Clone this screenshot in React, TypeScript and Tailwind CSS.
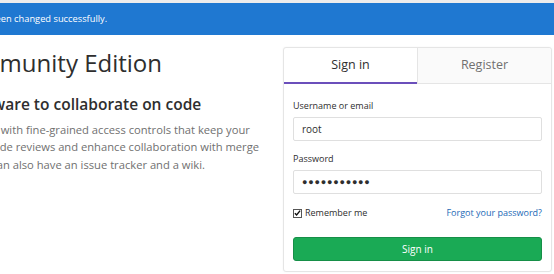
const font = { fontFamily: '"Open Sans", "Noto Sans", sans-serif' };

function Flash() {
  return (
    <div className="flex h-[32px] items-center overflow-hidden bg-[#1f78d1] text-[9.3px] text-white">
      <span className="-ml-[95px] whitespace-nowrap">Your password has been changed successfully.</span>
    </div>
  );
}

function Intro() {
  return (
    <div className="min-w-0 flex-1 overflow-hidden pt-[14px] text-[#2e2e2e]">
      <h1 className="-ml-[131px] whitespace-nowrap text-[24px] leading-[28px] font-normal">GitLab Community Edition</h1>
      <h3 className="mt-[17px] -ml-[135px] whitespace-nowrap text-[15.5px] leading-[20px] font-semibold">
        Open source software to collaborate on code
      </h3>
      <p className="mt-[7px] -ml-[127px] whitespace-nowrap text-[11.2px] leading-[17.3px] text-[#707070]">
        Manage Git repositories with fine-grained access controls that keep your
        <br />
        code secure. Perform code reviews and enhance collaboration with merge
        <br />
        requests. Each project can also have an issue tracker and a wiki.
      </p>
    </div>
  );
}

function Field({ label, value, password }: { label: string; value: string; password?: boolean }) {
  return (
    <div>
      <label className="block text-[9px] leading-[14px] text-[#2e2e2e]">{label}</label>
      <div className="mt-[4px] flex h-[24px] items-center rounded-[2px] border border-[#dfdfdf] bg-white px-[8px] text-[10px] text-[#2e2e2e]">
        {password ? <span className="text-[9px] tracking-[0.8px]">{value}</span> : value}
      </div>
    </div>
  );
}

function SignInCard() {
  return (
    <div className="mt-[12px] mr-[2px] w-[269px] shrink-0 self-start rounded-[3px] border border-[#e5e5e5] bg-white shadow-[0_0_2px_rgba(0,0,0,0.05)]">
      <div className="flex h-[36px]">
        <div className="flex flex-1 items-center justify-center border-b-2 border-[#6b4fbb] text-[12.5px] text-[#2e2e2e]">
          Sign in
        </div>
        <div className="flex flex-1 items-center justify-center rounded-tr-[3px] border-b border-l border-[#e5e5e5] bg-[#fafafa] text-[12.5px] text-[#707070]">
          Register
        </div>
      </div>
      <div className="px-[9px] pt-[15px] pb-[10px]">
        <Field label="Username or email" value="root" />
        <div className="mt-[11px]">
          <Field label="Password" value="●●●●●●●●●●●" password />
        </div>
        <div className="mt-[12px] flex h-[14px] items-center justify-between text-[9px]">
          <label className="flex items-center gap-[3px] text-[#2e2e2e]">
            <span className="flex h-[9px] w-[9px] items-center justify-center border border-[#555] bg-white">
              <svg width="8" height="8" viewBox="0 0 8 8" fill="none">
                <path d="M1 4.2L3 6.3L7 1.3" stroke="#111" strokeWidth="1.6" />
              </svg>
            </span>
            Remember me
          </label>
          <a className="text-[#1b69b6]">Forgot your password?</a>
        </div>
        <button className="mt-[17px] flex h-[24px] w-full items-center justify-center rounded-[3px] border border-[#168f48] bg-[#1aaa55] text-[10px] text-white">
          Sign in
        </button>
      </div>
    </div>
  );
}

export default function App() {
  return (
    <div className="h-[274px] w-[554px] overflow-hidden bg-white" style={font}>
      <div className="h-[3px] bg-[#ececec]" />
      <Flash />
      <div className="flex">
        <Intro />
        <SignInCard />
      </div>
    </div>
  );
}
